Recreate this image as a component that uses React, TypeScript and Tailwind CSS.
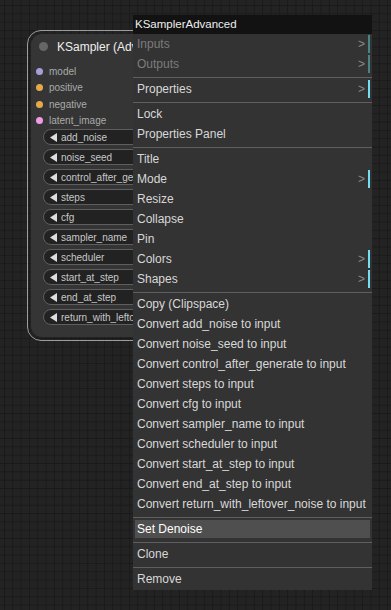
const inputs = [
  { name: "model", color: "bg-[#a99fd8]" },
  { name: "positive", color: "bg-[#e8a84a]" },
  { name: "negative", color: "bg-[#e8a84a]" },
  { name: "latent_image", color: "bg-[#ee9be8]" },
];

const widgets = [
  "add_noise",
  "noise_seed",
  "control_after_generate",
  "steps",
  "cfg",
  "sampler_name",
  "scheduler",
  "start_at_step",
  "end_at_step",
  "return_with_leftover_noise",
];

type Item = { label: string; disabled?: boolean; sub?: boolean; active?: boolean } | "sep";

const menuItems: Item[] = [
  { label: "Inputs", disabled: true, sub: true },
  { label: "Outputs", disabled: true, sub: true },
  "sep",
  { label: "Properties", sub: true },
  "sep",
  { label: "Lock" },
  { label: "Properties Panel" },
  "sep",
  { label: "Title" },
  { label: "Mode", sub: true },
  { label: "Resize" },
  { label: "Collapse" },
  { label: "Pin" },
  { label: "Colors", sub: true },
  { label: "Shapes", sub: true },
  "sep",
  { label: "Copy (Clipspace)" },
  ...widgets.map((w) => ({ label: `Convert ${w} to input` })),
  "sep",
  { label: "Set Denoise", active: true },
  "sep",
  { label: "Clone" },
  "sep",
  { label: "Remove" },
];

function Node() {
  // the right part of the node sits under the context menu, so texts are clipped at the menu edge
  return (
    <div className="absolute left-[27px] top-[30px] w-[170px] h-[311px] rounded-[14px] border border-[#9c9c9c] p-[3px]">
      <div className="h-[303px] rounded-[11px] bg-[#353535] flex flex-col">
        <div className="h-[25px] flex items-center pl-[8px] gap-[9px] shrink-0">
          <div className="w-[9px] h-[9px] rounded-full bg-[#666]" />
          <span className="text-[12px] text-[#eee] whitespace-nowrap overflow-hidden w-[76px]">KSampler (Advanced)</span>
        </div>
        <div className="pt-[4px] flex flex-col">
          {inputs.map((i) => (
            <div key={i.name} className="h-[16.5px] flex items-center pl-[5px] gap-[6px]">
              <div className={`w-[7px] h-[7px] rounded-full ${i.color}`} />
              <span className="text-[10px] text-[#aaa]">{i.name}</span>
            </div>
          ))}
        </div>
        <div className="flex flex-col gap-[4px] pl-[12px]">
          {widgets.map((w) => (
            <div
              key={w}
              className="h-[16px] w-[150px] rounded-full border border-[#5e5e5e] bg-[#222] flex items-center pl-[6px] gap-[4px]"
            >
              <svg width="7" height="9" viewBox="0 0 7 9" className="shrink-0">
                <polygon points="7,0 7,9 0,4.5" fill="#ddd" />
              </svg>
              <span className="text-[10px] text-[#c8c8c8] whitespace-nowrap overflow-hidden w-[72px] shrink-0">{w}</span>
            </div>
          ))}
        </div>
      </div>
    </div>
  );
}

function Menu() {
  return (
    <div className="absolute left-[133px] top-[15px] w-[239px] bg-[#333] pb-px">
      <div className="h-[19px] bg-[#121212] flex items-center pl-[2px] text-[11.5px] text-[#eee]">
        KSamplerAdvanced
      </div>
      {menuItems.map((it, idx) =>
        it === "sep" ? (
          <div key={idx} className="h-[5px] pt-[3px]">
            <div className="h-px bg-[#5f5f5f]" />
          </div>
        ) : (
          <div key={idx} className="h-[20px] px-[2px] py-px">
            <div
              className={`h-[18px] flex items-center pl-[2px] text-[12px] whitespace-nowrap ${
                it.active ? "bg-[#4f4f4f] text-white" : it.disabled ? "text-[#7c7c7c]" : "text-[#d8d8d8]"
              }`}
            >
              <span className="flex-1">{it.label}</span>
              {it.sub && (
                <>
                  <span className="text-[#8a8a8a] text-[12px] mr-[3px]">&gt;</span>
                  <div className={`w-[2px] h-[18px] ${it.disabled ? "bg-[#4a8585]" : "bg-[#74dff0]"}`} />
                </>
              )}
            </div>
          </div>
        )
      )}
    </div>
  );
}

export default function App() {
  return (
    <div className="relative w-[391px] h-[610px] overflow-hidden font-['Liberation_Sans',Arial,sans-serif] bg-[#232323] bg-[linear-gradient(to_right,#1a1a1a_1px,transparent_1px),linear-gradient(to_bottom,#1a1a1a_1px,transparent_1px)] bg-[size:8.33px_8.33px] bg-[position:4px_5px]">
      <Node />
      <Menu />
    </div>
  );
}
